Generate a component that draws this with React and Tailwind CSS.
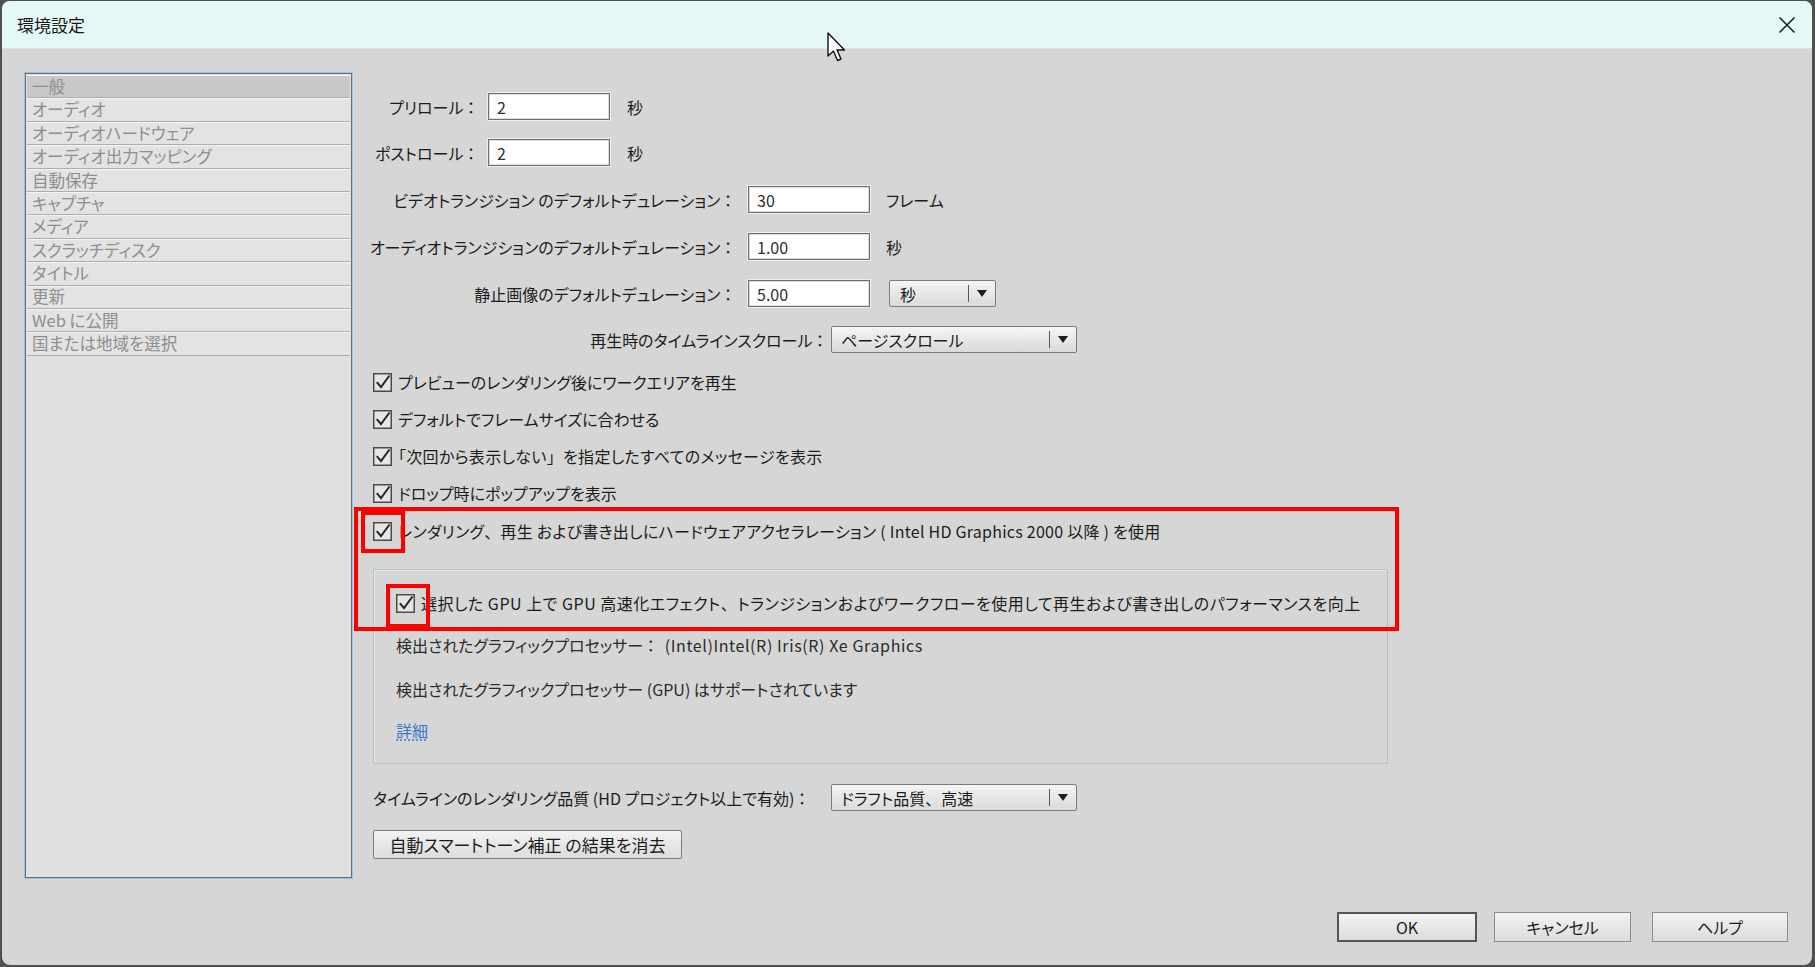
import React from "react";

const F = "font-['Noto_Sans_CJK_JP','Noto_Sans',sans-serif] [font-feature-settings:'palt']";

function P({ children }) {
  return <span className="[font-feature-settings:normal]">{children}</span>;
}

function CheckBox() {
  return (
    <svg width="19" height="19" viewBox="0 0 19 19" className="shrink-0">
      <rect x="0.75" y="0.75" width="17.5" height="17.5" fill="#e6e6e6" stroke="#4b4b4b" strokeWidth="1.5" />
      <path d="M3.8 9.2 L8 14.2 L16.5 2.5" fill="none" stroke="#262626" strokeWidth="2" strokeLinejoin="miter" />
    </svg>
  );
}

function Arrow() {
  return (
    <svg width="10" height="7" viewBox="0 0 10 7">
      <path d="M0 0 L10 0 L5 7 Z" fill="#1e1e1e" />
    </svg>
  );
}

function Input({ value }) {
  return (
    <div className="w-[122px] h-[27px] bg-white border border-[#6f6f6f] shadow-[inset_0_0_0_1px_#dcdcdc,0_0_0_1px_#eeeeee] flex items-center pl-[8px] text-[16px] text-[#2e2e2e]">
      {value}
    </div>
  );
}

function CheckRow({ children, className, textClass }) {
  return (
    <div className={"flex items-center h-[26px] gap-[6px] " + (className || "")}>
      <CheckBox />
      <span className={"text-[16px] text-[#1c1c1c] whitespace-nowrap " + (textClass || "")}>{children}</span>
    </div>
  );
}

function Btn({ children, className }) {
  return (
    <div className={"flex items-center justify-center bg-gradient-to-b from-[#f3f3f3] to-[#dcdcdc] text-[16px] text-[#1c1c1c] " + className}>
      {children}
    </div>
  );
}

const items = [
  "一般",
  "オーディオ",
  "オーディオハードウェア",
  "オーディオ出力マッピング",
  "自動保存",
  "キャプチャ",
  "メディア",
  "スクラッチディスク",
  "タイトル",
  "更新",
  "Web に公開",
  "国または地域を選択",
];

export default function App() {
  return (
    <div className={"relative w-[1815px] h-[967px] bg-[#505050] overflow-hidden " + F}>
      <div className="ml-[2px] mt-[1px] w-[1810px] h-[964px] rounded-[8px] overflow-hidden bg-[#d6d6d6] flex flex-col">
        {/* title bar */}
        <div className="h-[48px] shrink-0 bg-[#e4f8f6] border-b border-[#d9e4e3] flex items-center justify-between pl-[15px] pr-[16px]">
          <span className="text-[17px] text-[#1a1a1a]">環境設定</span>
          <svg width="18" height="18" viewBox="0 0 18 18">
            <path d="M1.5 1.5 L16.5 16.5 M16.5 1.5 L1.5 16.5" stroke="#222" strokeWidth="1.6" />
          </svg>
        </div>

        {/* body */}
        <div className="flex-1 flex items-start pl-[23px]">
          {/* list */}
          <div className="mt-[24px] w-[327px] h-[805px] bg-[#e0e0e0] border border-[#6d6d6d] ring-1 ring-[#8ec6ee] p-px flex flex-col">
            {items.map((t, i) => (
              <div
                key={t}
                className={
                  "h-[23.4px] shrink-0 flex items-center pl-[5px] text-[16.5px] leading-none text-[#8e8e8e] border-b border-[#adadad] shadow-[inset_0_1px_0_#f4f4f4] " +
                  (i === 0 ? "bg-[#c9c9c9]" : "bg-[#e3e3e3]")
                }
              >
                {t}
              </div>
            ))}
          </div>

          {/* right column */}
          <div className="ml-[16px] mt-[44px] flex flex-col text-[16px] text-[#1c1c1c]">
            <div className="flex items-center h-[27px]">
              <span className="w-[107px] text-right whitespace-nowrap">プリロール ：</span>
              <div className="ml-[13px]"><Input value="2" /></div>
              <span className="ml-[17px]">秒</span>
            </div>
            <div className="flex items-center h-[27px] mt-[19px]">
              <span className="w-[107px] text-right whitespace-nowrap">ポストロール ：</span>
              <div className="ml-[13px]"><Input value="2" /></div>
              <span className="ml-[17px]">秒</span>
            </div>
            <div className="flex items-center h-[27px] mt-[20px]">
              <span className="w-[364px] text-right whitespace-nowrap">ビデオトランジション のデフォルトデュレーション ：</span>
              <div className="ml-[16px]"><Input value="30" /></div>
              <span className="ml-[16px]">フレーム</span>
            </div>
            <div className="flex items-center h-[27px] mt-[20px]">
              <span className="w-[364px] text-right whitespace-nowrap">オーディオトランジションのデフォルトデュレーション ：</span>
              <div className="ml-[16px]"><Input value="1.00" /></div>
              <span className="ml-[16px]">秒</span>
            </div>
            <div className="flex items-center h-[27px] mt-[20px]">
              <span className="w-[364px] text-right whitespace-nowrap">静止画像のデフォルトデュレーション ：</span>
              <div className="ml-[16px]"><Input value="5.00" /></div>
              <div className="ml-[19px] w-[107px] h-[27px] border border-[#7c7c7c] rounded-[2px] bg-gradient-to-b from-[#f5f5f5] to-[#dadada] flex items-center">
                <span className="flex-1 pl-[10px]">秒</span>
                <span className="w-px h-[17px] bg-[#5a5a5a]" />
                <span className="w-[26px] flex justify-center"><Arrow /></span>
              </div>
            </div>
            <div className="flex items-center h-[27px] mt-[19px]">
              <span className="w-[456px] text-right whitespace-nowrap">再生時のタイムラインスクロール ：</span>
              <div className="ml-[7px] w-[246px] h-[27px] border border-[#7c7c7c] rounded-[2px] bg-gradient-to-b from-[#f5f5f5] to-[#dadada] flex items-center">
                <span className="flex-1 pl-[9px]">ページスクロール</span>
                <span className="w-px h-[17px] bg-[#5a5a5a]" />
                <span className="w-[26px] flex justify-center"><Arrow /></span>
              </div>
            </div>

            <div className="ml-[5px] flex flex-col">
              <CheckRow className="mt-[16px]">プレビューのレンダリング後にワークエリアを再生</CheckRow>
              <CheckRow className="mt-[11px]">デフォルトでフレームサイズに合わせる</CheckRow>
              <CheckRow className="mt-[11px]" textClass="tracking-[0.3px]">
                「次回から表示しない<P>」</P>を指定したすべてのメッセージを表示
              </CheckRow>
              <CheckRow className="mt-[11px]">ドロップ時にポップアップを表示</CheckRow>
              <CheckRow className="mt-[12px]" textClass="tracking-[0.25px]">
                レンダリング<P>、</P>再生 および書き出しにハードウェアアクセラレーション ( Intel HD Graphics 2000 以降 ) を使用
              </CheckRow>

              {/* group box */}
              <div className="mt-[25px] w-[1015px] h-[195px] border border-[#bdbdbd] shadow-[inset_1px_1px_0_#e6e6e6] flex flex-col pl-[22px] pt-[20px]">
                <CheckRow textClass="tracking-[0.5px]">
                  選択した GPU 上で GPU 高速化エフェクト<P>、</P>トランジションおよびワークフローを使用して再生および書き出しのパフォーマンスを向上
                </CheckRow>
                <div className="h-[26px] mt-[16px] flex items-center text-[#2a2a2a] whitespace-nowrap">
                  検出されたグラフィックプロセッサー ：<span className="ml-[10px] tracking-[0.6px]">(Intel)Intel(R) Iris(R) Xe Graphics</span>
                </div>
                <div className="h-[26px] mt-[18px] flex items-center text-[#2a2a2a] whitespace-nowrap">
                  検出されたグラフィックプロセッサー (GPU) はサポートされています
                </div>
                <div className="h-[26px] mt-[15px] flex items-center">
                  <span className="text-[#3a76c8] underline decoration-dotted decoration-[#3a76c8] underline-offset-[3px]">詳細</span>
                </div>
              </div>

              <div className="flex items-center h-[27px] mt-[20px]">
                <span className="w-[451px] whitespace-nowrap">タイムラインのレンダリング品質 (HD プロジェクト以上で有効) ：</span>
                <div className="ml-[7px] w-[246px] h-[27px] border border-[#7c7c7c] rounded-[2px] bg-gradient-to-b from-[#f5f5f5] to-[#dadada] flex items-center">
                  <span className="flex-1 pl-[9px]">ドラフト品質<P>、</P>高速</span>
                  <span className="w-px h-[17px] bg-[#5a5a5a]" />
                  <span className="w-[26px] flex justify-center"><Arrow /></span>
                </div>
              </div>

              <Btn className="mt-[19px] w-[309px] h-[29px] border border-[#7d7d7d] rounded-[2px] text-[17px]">
                自動スマートトーン補正 の結果を消去
              </Btn>
            </div>
          </div>
        </div>

        {/* footer */}
        <div className="h-[53px] shrink-0 flex items-start justify-end pr-[24px]">
          <Btn className="w-[140px] h-[30px] border-2 border-[#555555]">OK</Btn>
          <Btn className="ml-[17px] w-[137px] h-[30px] border border-[#8c8c8c]">キャンセル</Btn>
          <Btn className="ml-[21px] w-[136px] h-[30px] border border-[#8c8c8c]">ヘルプ</Btn>
        </div>
      </div>

      {/* red annotation overlays */}
      <div className="absolute left-[354px] top-[507px] w-[1045px] h-[124px] border-[4px] border-[#ff0000] pointer-events-none" />
      <div className="absolute left-[361px] top-[511px] w-[44px] h-[42px] border-[4px] border-[#ff0000] pointer-events-none" />
      <div className="absolute left-[386px] top-[584px] w-[44px] h-[44px] border-[4px] border-[#ff0000] pointer-events-none" />

      {/* mouse cursor */}
      <svg className="absolute left-[827px] top-[32px]" width="20" height="32" viewBox="0 0 20 32">
        <path d="M1 1 L1 24 L6.5 19 L10.5 28.5 L14 27 L10 18 L17.5 18 Z" fill="#ffffff" stroke="#111111" strokeWidth="1.4" strokeLinejoin="round" />
      </svg>
    </div>
  );
}
